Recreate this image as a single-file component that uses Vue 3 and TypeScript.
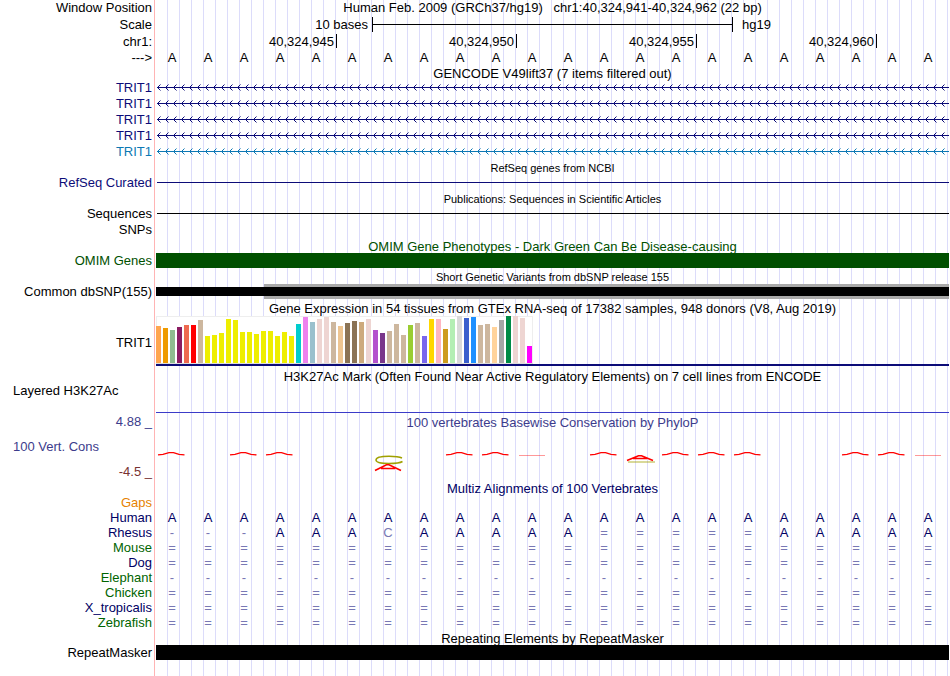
<script setup lang="ts">
interface Bar {
  color: string
  height: number
}

interface Alignment {
  name: string
  tone: string
  bases: string
}

const position = 'Human Feb. 2009 (GRCh37/hg19)   chr1:40,324,941-40,324,962 (22 bp)'
const bases: string[] = Array(22).fill('A')
const rulerTicks: { label: string; from: number; to: number }[] = [
  { label: '40,324,945', from: 1, to: 6 },
  { label: '40,324,950', from: 6, to: 11 },
  { label: '40,324,955', from: 11, to: 16 },
  { label: '40,324,960', from: 16, to: 21 },
]

const transcripts: string[] = ['navy', 'navy', 'navy', 'navy', 'blue']

const tissueColors: string[] = [
  '#ffa54f', '#ee9a00', '#8fbc8f', '#8b1c62', '#ee6a50', '#ff0000', '#cdb79e',
  ...Array(13).fill('#eeee00'),
  '#00cdcd', '#ee82ee', '#9ac0cd', '#eed5d2', '#eed5d2', '#cdb79e', '#eec591',
  '#8b7355', '#8b7355', '#cdaa7d', '#eed5d2', '#b452cd', '#7a378b', '#cdb79e',
  '#cdb79e', '#cdb79e', '#9acd32', '#cdb79e', '#7a67ee', '#ffd700', '#ffb6c1',
  '#cd9b1d', '#b4eeb4', '#d9d9d9', '#3a5fcd', '#1e90ff', '#cdb79e', '#cdb79e',
  '#ffd39b', '#a6a6a6', '#008b45', '#eed5d2', '#eed5d2', '#ff00ff',
]
const tissueLevels: number[] = [
  37, 35, 33, 36, 38, 38, 43, 27, 28, 30, 44, 43, 31, 31, 29, 32, 32, 27, 31, 27,
  39, 46, 41, 44, 46, 41, 37, 40, 42, 41, 44, 33, 30, 32, 39, 28, 38, 40, 27, 44,
  44, 34, 44, 47, 45, 46, 38, 39, 36, 43, 47, 47, 45, 17,
]
const tissues: Bar[] = tissueColors.map((color, i) => ({ color, height: tissueLevels[i] }))

// Conservation logo per base: s = slight peak, f = flat, c = C over A, a = A over C
const conservation: string[] = 's.ss..c.ssf.sasss..ssf'.split('')

const alignments: Alignment[] = [
  { name: 'Gaps', tone: 'orange', bases: '' },
  { name: 'Human', tone: 'midnight', bases: 'A'.repeat(22) },
  { name: 'Rhesus', tone: 'midnight', bases: '---AAACAAAAA=====AAAAA' },
  { name: 'Mouse', tone: 'green', bases: '='.repeat(22) },
  { name: 'Dog', tone: 'midnight', bases: '='.repeat(22) },
  { name: 'Elephant', tone: 'green', bases: '-'.repeat(22) },
  { name: 'Chicken', tone: 'green', bases: '='.repeat(22) },
  { name: 'X_tropicalis', tone: 'midnight', bases: '='.repeat(22) },
  { name: 'Zebrafish', tone: 'green', bases: '='.repeat(22) },
]
</script>

<template>
  <main class="browser">
    <div class="row h16">
      <div class="label">Window Position</div>
      <div class="track center pre">{{ position }}</div>
    </div>
    <div class="row h17">
      <div class="label">Scale</div>
      <div class="track cells">
        <span class="scale-text">10 bases</span>
        <span class="scale-line"></span>
        <span class="scale-end">hg19</span>
      </div>
    </div>
    <div class="row h17">
      <div class="label">chr1:</div>
      <div class="track cells">
        <span
          v-for="tick in rulerTicks"
          :key="tick.label"
          class="tick"
          :style="{ gridColumn: `${tick.from} / ${tick.to}` }"
        >{{ tick.label }}</span>
      </div>
    </div>
    <div class="row h15">
      <div class="label">---&gt;</div>
      <div class="track cells">
        <span v-for="(base, i) in bases" :key="i" class="base">{{ base }}</span>
      </div>
    </div>

    <h2 class="title h15">GENCODE V49lift37 (7 items filtered out)</h2>
    <div v-for="(tone, i) in transcripts" :key="i" class="row h16" :class="tone">
      <div class="label">TRIT1</div>
      <svg class="track strand" height="16" aria-hidden="true">
        <defs>
          <pattern :id="`strand-${i}`" width="8" height="16" patternUnits="userSpaceOnUse">
            <path d="M4.5 4.5 L1.5 7.5 L4.5 10.5" fill="none" stroke="currentColor" stroke-width="1" />
          </pattern>
        </defs>
        <rect width="100%" height="16" :fill="`url(#strand-${i})`" />
        <rect x="1" y="7" width="100%" height="1" fill="currentColor" />
      </svg>
    </div>

    <h2 class="title small h15">RefSeq genes from NCBI</h2>
    <div class="row h16 navy">
      <div class="label">RefSeq Curated</div>
      <div class="track"><div class="thin"></div></div>
    </div>

    <h2 class="title small h15">Publications: Sequences in Scientific Articles</h2>
    <div class="row h16">
      <div class="label">Sequences</div>
      <div class="track"><div class="thin"></div></div>
    </div>
    <div class="row h16">
      <div class="label">SNPs</div>
      <div class="track"></div>
    </div>

    <h2 class="title h15 forest">OMIM Gene Phenotypes - Dark Green Can Be Disease-causing</h2>
    <div class="row h15 forest">
      <div class="label">OMIM Genes</div>
      <div class="track block"></div>
    </div>

    <h2 class="title small h16">Short Genetic Variants from dbSNP release 155</h2>
    <div class="row h15">
      <div class="label">Common dbSNP(155)</div>
      <div class="track variants">
        <div class="shade"></div>
        <div class="variant"></div>
      </div>
    </div>

    <h2 class="title h17">Gene Expression in 54 tissues from GTEx RNA-seq of 17382 samples, 948 donors (V8, Aug 2019)</h2>
    <div class="row expression">
      <div class="label">TRIT1</div>
      <div class="track gene-line">
        <div class="chart">
          <div
            v-for="(tissue, i) in tissues"
            :key="i"
            class="bar"
            :style="{ height: `${tissue.height}px`, background: tissue.color }"
          ></div>
        </div>
      </div>
    </div>

    <h2 class="title layered-title">H3K27Ac Mark (Often Found Near Active Regulatory Elements) on 7 cell lines from ENCODE</h2>
    <div class="row layered">
      <div class="label left">Layered H3K27Ac</div>
      <div class="track signal"></div>
    </div>

    <div class="row conservation">
      <div class="label range">
        <span class="violet">4.88 _</span>
        <span class="violet name">100 Vert. Cons</span>
        <span class="maroon">-4.5 _</span>
      </div>
      <div class="track">
        <h2 class="inner-title violet">100 vertebrates Basewise Conservation by PhyloP</h2>
        <div class="cells logos">
          <svg v-for="(kind, i) in conservation" :key="i" class="logo" viewBox="0 0 36 24" aria-hidden="true">
            <path
              v-if="kind === 's'"
              d="M2 6.9 L7 6.4 L13 4.6 H17.5 L23 6.4 L28.5 6.9"
              fill="none"
              stroke="#ff0000"
              stroke-width="1.4"
            />
            <path v-else-if="kind === 'f'" d="M3 7.5 H29" stroke="#ff0000" stroke-width="1" opacity="0.4" />
            <g v-else-if="kind === 'c'" fill="none">
              <path d="M30 10 C27 8.6 21 8.3 17 8.3 C9 8.3 4 9.8 4 12 C4 14.2 9 15.5 17 15.5 C22 15.5 28 15 30.500 13.500" stroke="#a0a000" stroke-width="1.5" />
              <path d="M3 22.5 L14.5 16.7 H17 L29 22.5 M9 20.5 H23" stroke="#ff0000" stroke-width="1.6" />
            </g>
            <g v-else-if="kind === 'a'" fill="none">
              <path d="M4 14 H31" stroke="#a0a000" opacity="0.5" stroke-width="1.6" />
              <path d="M3 12.5 L14.5 7.7 H17.5 L29 12.5 M9 10.5 H23" stroke="#ff0000" stroke-width="1.5" />
            </g>
          </svg>
        </div>
      </div>
    </div>

    <h2 class="title h15 midnight">Multiz Alignments of 100 Vertebrates</h2>
    <div v-for="species in alignments" :key="species.name" class="row h15" :class="species.tone">
      <div class="label">{{ species.name }}</div>
      <div class="track cells">
        <span
          v-for="(base, i) in species.bases"
          :key="i"
          class="base"
          :class="base === 'A' ? 'match' : 'faint'"
        >{{ base }}</span>
      </div>
    </div>

    <h2 class="title h15">Repeating Elements by RepeatMasker</h2>
    <div class="row h15">
      <div class="label">RepeatMasker</div>
      <div class="track block"></div>
    </div>
  </main>
</template>

<style>
body {
  margin: 0;
  background: #fff;
}
</style>

<style scoped>
.browser {
  position: relative;
  box-sizing: border-box;
  min-height: 100vh;
  padding-right: 1px;
  overflow: hidden;
  color: #000;
  font-family: "Liberation Sans", Arial, sans-serif;
  font-size: 13px;
}

/* Guide lines behind every track: three per base */
.browser::before {
  content: "";
  position: absolute;
  z-index: -1;
  inset: 0 2px 0 156px;
  background: linear-gradient(to left, #dcdcfa 1px, transparent 1px) 0 0 / calc(100% / 66) 100%;
}

.browser::after {
  content: "";
  position: absolute;
  inset: 0 auto 0 154px;
  width: 1px;
  background: #ffb4b4;
}

.row {
  display: flex;
}

.label {
  box-sizing: border-box;
  flex: 0 0 156px;
  padding-right: 4px;
  text-align: right;
  white-space: nowrap;
}

.label.left {
  padding-left: 13px;
  text-align: left;
}

.track {
  flex: 1;
  min-width: 0;
  white-space: nowrap;
}

.center {
  text-align: center;
}

.pre {
  white-space: pre;
}

.h15 {
  height: 15px;
  line-height: 15px;
}

.h16 {
  height: 16px;
  line-height: 16px;
}

.h17 {
  height: 17px;
  line-height: 17px;
}

.title,
.inner-title {
  margin: 0;
  font-size: 13px;
  font-weight: normal;
  text-align: center;
  white-space: nowrap;
}

.title {
  padding-left: 156px;
  line-height: 17px;
}

.title.small {
  font-size: 11px;
}

.title.h16 {
  line-height: 18px;
}

.title.h17 {
  line-height: 19px;
}

.navy {
  color: #0c0c78;
}

.blue {
  color: #0c78b4;
}

.forest {
  color: #005000;
}

.green {
  color: #006400;
}

.midnight {
  color: #000064;
}

.orange {
  color: #e68200;
}

.violet {
  color: #3c3c8c;
}

.maroon {
  color: #783232;
}

.cells {
  display: grid;
  grid-template-columns: repeat(22, minmax(0, 1fr));
  padding-right: 1px;
}

.scale-text {
  grid-column: 1 / 7;
  padding-right: 4px;
  text-align: right;
}

.scale-line {
  grid-column: 7 / 17;
  height: 15px;
  margin-top: 1px;
  border-left: 1px solid #000;
  background: linear-gradient(#000, #000) 0 7px / 100% 1px no-repeat;
}

.scale-end {
  grid-column: 17 / 23;
  height: 15px;
  margin-top: 1px;
  padding-left: 9px;
  border-left: 1px solid #000;
  line-height: 15px;
}

.tick {
  height: 14px;
  margin: 1px -1px 0 0;
  padding-right: 2px;
  border-right: 1px solid #000;
  line-height: 16px;
  text-align: right;
}

.base {
  padding-right: 4px;
  text-align: center;
}

.match {
  color: #000064;
}

.faint {
  color: #7878b4;
}

.strand {
  display: block;
}

.thin {
  height: 1px;
  margin: 7px 0 0 1px;
  background: currentColor;
}

.block {
  background: currentColor;
}

.variants {
  display: grid;
  grid-template-columns: repeat(22, minmax(0, 1fr));
  grid-template-rows: 3px 9px 3px;
}

.shade {
  grid-area: 1 / 4 / 4 / 23;
  background: #a9a9a9;
}

.variant {
  grid-area: 2 / 1 / 3 / 23;
  background: #000;
}

.expression {
  height: 50px;
  line-height: 54px;
}

.gene-line {
  border-bottom: 2px solid #0c0c78;
}

.chart {
  display: flex;
  box-sizing: border-box;
  width: max-content;
  height: 48px;
  padding-right: 1px;
  gap: 2px;
  align-items: flex-end;
  border-bottom: 1px solid #ddd;
  background: #fff;
  box-shadow: inset 1px 1px #eee, inset -1px 0 #eee;
}

.bar {
  width: 5px;
}

.title.layered-title {
  height: 15px;
  padding-top: 3px;
  line-height: 16px;
}

.layered {
  height: 29px;
  line-height: 14px;
}

.signal {
  border-bottom: 1px solid #3c3cc8;
}

.conservation {
  height: 67px;
}

.range {
  display: grid;
  grid-template-rows: 18px 32px 18px;
  line-height: 18px;
}

.range .name {
  padding-left: 13px;
  line-height: 32px;
  text-align: left;
}

.inner-title {
  line-height: 20px;
}

.logos {
  margin-top: 15px;
}

.logo {
  display: block;
  width: 100%;
  height: 24px;
}
</style>
